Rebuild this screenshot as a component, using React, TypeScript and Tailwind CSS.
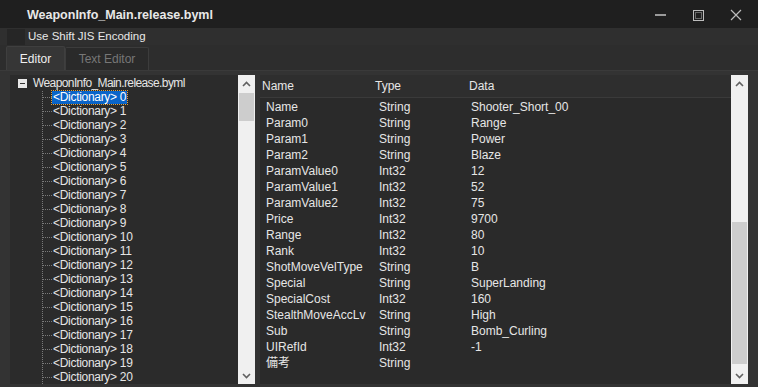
import React from "react";

const rows: [string, string, string][] = [
  ["Name", "String", "Shooter_Short_00"],
  ["Param0", "String", "Range"],
  ["Param1", "String", "Power"],
  ["Param2", "String", "Blaze"],
  ["ParamValue0", "Int32", "12"],
  ["ParamValue1", "Int32", "52"],
  ["ParamValue2", "Int32", "75"],
  ["Price", "Int32", "9700"],
  ["Range", "Int32", "80"],
  ["Rank", "Int32", "10"],
  ["ShotMoveVelType", "String", "B"],
  ["Special", "String", "SuperLanding"],
  ["SpecialCost", "Int32", "160"],
  ["StealthMoveAccLv", "String", "High"],
  ["Sub", "String", "Bomb_Curling"],
  ["UIRefId", "Int32", "-1"],
  ["備考", "String", ""],
];

function Up() {
  return (
    <svg width="9" height="6" viewBox="0 0 9 6">
      <path d="M1 5 L4.5 1.5 L8 5" fill="none" stroke="#606060" strokeWidth="1.6" />
    </svg>
  );
}
function Down() {
  return (
    <svg width="9" height="6" viewBox="0 0 9 6">
      <path d="M1 1 L4.5 4.5 L8 1" fill="none" stroke="#606060" strokeWidth="1.6" />
    </svg>
  );
}

function ScrollBar({ thumbTop, thumbH }: { thumbTop: number; thumbH: number }) {
  return (
    <div className="w-[17px] bg-[#f0f0f0] flex flex-col shrink-0">
      <div className="h-[17px] flex items-center justify-center shrink-0">
        <Up />
      </div>
      <div className="flex-1 relative">
        <div
          className="absolute left-[1px] right-[1px] bg-[#cdcdcd]"
          style={{ top: thumbTop, height: thumbH }}
        />
      </div>
      <div className="h-[17px] flex items-center justify-center shrink-0">
        <Down />
      </div>
    </div>
  );
}

export default function App() {
  const items = Array.from({ length: 21 }, (_, i) => i);
  return (
    <div
      className="w-[758px] h-[387px] bg-[#2d2d2d] flex flex-col overflow-hidden text-[#e6e6e6]"
      style={{ fontFamily: '"Liberation Sans", "Noto Sans CJK JP", sans-serif' }}
    >
      {/* Title bar */}
      <div className="h-[28px] bg-[#1f1f1f] flex items-center shrink-0">
        <div className="pl-[27px] pt-[3px] text-[12.5px] font-bold text-[#e8e8e8] flex-1">
          WeaponInfo_Main.release.byml
        </div>
        <div className="flex items-center h-full pt-[2px]">
          <div className="w-[38px] flex justify-center">
            <div className="w-[11px] h-[2px] bg-[#9a9a9a]" />
          </div>
          <div className="w-[38px] flex justify-center">
            <div className="w-[11px] h-[11px] border border-[#bdbdbd] p-[1px]">
              <div className="w-full h-full border-[0.5px] border-[#6a6a6a]" />
            </div>
          </div>
          <div className="w-[38px] flex justify-center mr-[3px]">
            <svg width="12" height="12" viewBox="0 0 12 12">
              <path d="M1 1 L11 11 M11 1 L1 11" stroke="#bdbdbd" strokeWidth="1.2" />
            </svg>
          </div>
        </div>
      </div>

      {/* Menu row */}
      <div className="h-[17px] bg-[#2f2f2f] flex items-center shrink-0">
        <div className="ml-[7px] w-[18px] h-[16px] bg-[#262626]" />
        <div className="ml-[3px] text-[11.5px] text-[#e8e8e8] leading-none">Use Shift JIS Encoding</div>
      </div>

      {/* Tabs */}
      <div className="h-[25px] flex items-end pl-[6px] shrink-0 bg-[#2d2d2d]">
        <div className="w-[59px] h-[24px] bg-[#363636] border border-[#3f3f3f] border-b-0 rounded-t-[2px] flex items-center justify-center text-[12px] text-[#f0f0f0]">
          Editor
        </div>
        <div className="w-[84px] h-[23px] bg-[#2a2a2a] border border-[#3c3c3c] border-b-0 rounded-t-[2px] flex items-center justify-center text-[12px] text-[#777777]">
          Text Editor
        </div>
      </div>

      {/* Content */}
      <div className="flex-1 bg-[#333333] flex pt-[4px] pb-[6px] pl-[10px] pr-[10px] border-t border-[#3a3a3a]">
        {/* Tree panel */}
        <div className="w-[245px] flex bg-[#2b2b2b] shrink-0">
          <div className="flex-1 relative overflow-hidden text-[12px] pl-[8px]">
            <div className="h-[14px] flex items-center mt-[1px]">
              <div className="w-[9px] h-[9px] bg-[#e8e8e8] flex items-center justify-center">
                <div className="w-[5px] h-[1px] bg-[#333]" />
              </div>
              <span className="ml-[6px] text-[#e6e6e6] tracking-[-0.6px]">WeaponInfo_Main.release.byml</span>
            </div>
            <div className="absolute left-[32px] top-[16px] bottom-0 border-l border-dotted border-[#7a7a7a]" />
            {items.map((i) => (
              <div key={i} className="h-[14px] flex items-center pl-[24px] relative">
                <div className="w-[10px] border-t border-dotted border-[#7a7a7a]" />
                <span
                  className={
                    i === 0
                      ? "px-[1px] bg-[#0a64c8] outline outline-1 outline-dotted outline-[#e0a040] text-white leading-[13px] tracking-[-0.3px]"
                      : "px-[1px] leading-[13px] tracking-[-0.3px]"
                  }
                >
                  &lt;Dictionary&gt; {i}
                </span>
              </div>
            ))}
          </div>
          <ScrollBar thumbTop={1} thumbH={28} />
        </div>

        <div className="w-[5px] shrink-0" />

        {/* Right panel */}
        <div className="flex-1 flex bg-[#2a2a2a]">
          <div className="flex-1 flex flex-col overflow-hidden">
            <div className="h-[23px] bg-[#2e2e2e] border-b border-[#3a3a3a] flex items-center text-[12px] text-[#e6e6e6] shrink-0">
              <div className="w-[115px] pl-[2px]">Name</div>
              <div className="w-[94px]">Type</div>
              <div>Data</div>
            </div>
            <div className="flex flex-col pt-[1px]">
              {rows.map(([n, t, d], i) => (
                <div key={i} className="h-[16px] flex items-center text-[12px] text-[#e6e6e6]">
                  <div className="w-[119px] pl-[6px]">{n}</div>
                  <div className="w-[92px]">{t}</div>
                  <div>{d}</div>
                </div>
              ))}
            </div>
          </div>
          <ScrollBar thumbTop={130} thumbH={142} />
        </div>
      </div>
    </div>
  );
}
